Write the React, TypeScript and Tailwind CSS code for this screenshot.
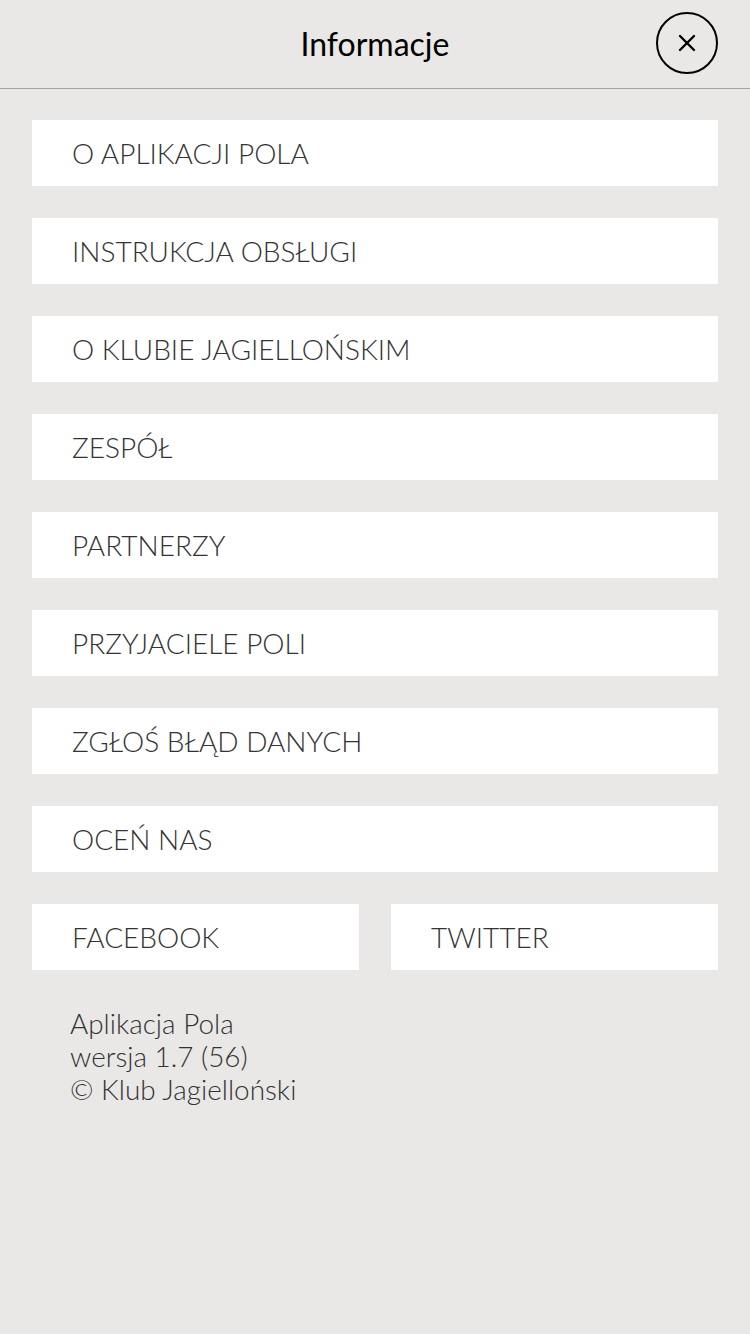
import React from "react";

const items = [
  "O APLIKACJI POLA",
  "INSTRUKCJA OBSŁUGI",
  "O KLUBIE JAGIELLOŃSKIM",
  "ZESPÓŁ",
  "PARTNERZY",
  "PRZYJACIELE POLI",
  "ZGŁOŚ BŁĄD DANYCH",
  "OCEŃ NAS",
];

function Btn({ label }: { label: string }) {
  return (
    <div className="h-[66px] bg-white flex items-center pl-[40px] text-[28px] font-light text-[#333333]">
      {label}
    </div>
  );
}

export default function App() {
  return (
    <div
      className="w-[750px] h-[1334px] bg-[#e9e8e6] overflow-hidden"
      style={{ fontFamily: "Lato, 'Noto Sans', sans-serif" }}
    >
      <header className="relative h-[89px] border-b border-[#a3a3a3] flex items-center justify-center">
        <h1 className="text-[32px] font-normal text-black">Informacje</h1>
        <div className="absolute right-[32px] top-[12px] w-[62px] h-[62px] rounded-full border-2 border-black flex items-center justify-center">
          <svg width="20" height="20" viewBox="0 0 20 20">
            <path d="M3 3 L17 17 M17 3 L3 17" stroke="black" strokeWidth="2.4" strokeLinecap="round" />
          </svg>
        </div>
      </header>
      <main className="px-[32px] pt-[31px] flex flex-col gap-[32px]">
        {items.map((t) => (
          <Btn key={t} label={t} />
        ))}
        <div className="grid grid-cols-2 gap-[32px]">
          <Btn label="FACEBOOK" />
          <Btn label="TWITTER" />
        </div>
      </main>
      <footer className="pl-[70px] pt-[37px] text-[27.9px] leading-[33px] font-light text-[#333333]">
        <div>Aplikacja Pola</div>
        <div>wersja 1.7 (56)</div>
        <div>© Klub Jagielloński</div>
      </footer>
    </div>
  );
}
